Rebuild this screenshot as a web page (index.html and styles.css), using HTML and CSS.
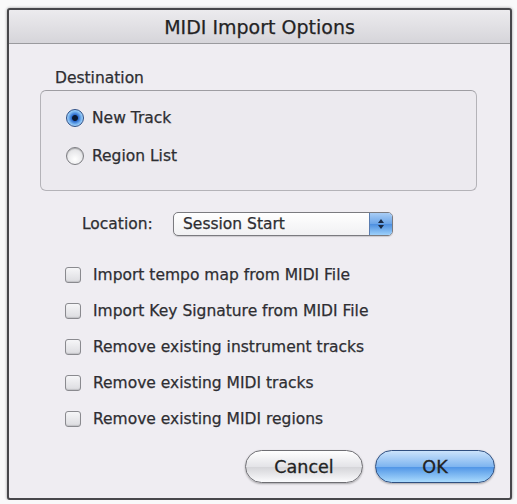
FILE: index.html
```html
<!doctype html>
<html lang="en">
  <head>
    <meta charset="UTF-8" />
    <title>MIDI Import Options</title>
    <link rel="stylesheet" href="styles.css">
  </head>
  <body>
    <div class="dialog">
      <div class="titleBar">MIDI Import Options</div>

      <div class="content">
        <div class="groupName">Destination</div>
        <div class="group">
          <label class="radioRow">
            <span class="radio checked"></span>
            <span>New Track</span>
          </label>
          <label class="radioRow">
            <span class="radio"></span>
            <span>Region List</span>
          </label>
        </div>

        <div class="locationRow">
          <span class="locationLabel">Location:</span>
          <div class="popup">
            <span class="popupText">Session Start</span>
            <span class="popupArrows">
              <svg width="8" height="12" viewBox="0 0 8 12">
                <path d="M4 1 L7 5 L1 5 Z" fill="#1a2a44"/>
                <path d="M4 11 L7 7 L1 7 Z" fill="#1a2a44"/>
              </svg>
            </span>
          </div>
        </div>

        <div class="options">
          <label class="checkRow"><span class="checkbox"></span>Import tempo map from MIDI File</label>
          <label class="checkRow"><span class="checkbox"></span>Import Key Signature from MIDI File</label>
          <label class="checkRow"><span class="checkbox"></span>Remove existing instrument tracks</label>
          <label class="checkRow"><span class="checkbox"></span>Remove existing MIDI tracks</label>
          <label class="checkRow"><span class="checkbox"></span>Remove existing MIDI regions</label>
        </div>

        <div class="buttons">
          <button class="btn cancel">Cancel</button>
          <button class="btn default">OK</button>
        </div>
      </div>
    </div>
  </body>
</html>
```

FILE: styles.css
```css
body {
  margin: 0;
  background: #f9f9fa;
  font-family: "DejaVu Sans", "Liberation Sans", sans-serif;
  font-size: 15.5px;
  color: #2e2e32;
  -webkit-text-stroke: 0.25px #2e2e32;
}

.dialog {
  margin: 8px 0 0 7px;
  width: 501px;
  height: 488px;
  border: 2px solid #47474b;
  border-radius: 3px;
  background: #efedf2;
  box-shadow: 0 0 3px rgba(0, 0, 0, 0.4);
  display: flex;
  flex-direction: column;
}

.titleBar {
  height: 33px;
  line-height: 34px;
  text-align: center;
  font-size: 19px;
  color: #222;
  background: linear-gradient(#ecebee, #d6d5da);
  border-bottom: 1px solid #9a9a9e;
  border-radius: 2px 2px 0 0;
}

.content {
  padding: 0 15px 0 31px;
  display: flex;
  flex-direction: column;
  flex: 1;
}

.groupName {
  margin: 24px 0 0 15px;
  height: 20px;
  line-height: 20px;
}

.group {
  margin-top: 2px;
  height: 101px;
  width: 437px;
  box-sizing: border-box;
  border: 1px solid #b4b3b8;
  border-top-color: #9e9da2;
  border-radius: 6px;
  background: #eceaef;
  padding: 17px 0 0 25px;
  display: flex;
  flex-direction: column;
  gap: 18px;
}

.radioRow {
  display: flex;
  align-items: center;
  gap: 8px;
  height: 20px;
}

.radio {
  width: 16px;
  height: 16px;
  border-radius: 50%;
  border: 1px solid #7d7d82;
  background: radial-gradient(circle at 50% 70%, #ffffff, #d8d8dc);
  box-shadow: inset 0 1px 1px rgba(0, 0, 0, 0.25);
}

.radio.checked {
  border-color: #2d4f86;
  background: radial-gradient(circle at 50% 50%, #0b1a33 0 2.5px, #2f6fd0 3.5px, #7db9f2 6.5px, #bfe3ff 9px);
  box-shadow: none;
}

.locationRow {
  margin: 21px 0 0 42px;
  display: flex;
  align-items: center;
  height: 24px;
}

.locationLabel {
  width: 91px;
}

.popup {
  width: 218px;
  height: 22px;
  border: 1px solid #7b7b80;
  border-radius: 5px;
  background: linear-gradient(#ffffff, #f1f1f3);
  display: flex;
  align-items: center;
  overflow: hidden;
  box-shadow: 0 1px 1px rgba(0, 0, 0, 0.15);
}

.popupText {
  flex: 1;
  padding-left: 9px;
}

.popupArrows {
  width: 22px;
  height: 22px;
  border-left: 1px solid #5a7db0;
  background: linear-gradient(#a9cdf5, #6aa4e8 50%, #4d8fe0 51%, #9cd0fb);
  display: flex;
  align-items: center;
  justify-content: center;
}

.options {
  margin: 30px 0 0 25px;
  display: flex;
  flex-direction: column;
  gap: 18px;
}

.checkRow {
  display: flex;
  align-items: center;
  gap: 12px;
  height: 18px;
}

.checkbox {
  width: 14px;
  height: 14px;
  border: 1px solid #8a8a8f;
  border-radius: 3px;
  background: linear-gradient(#f6f6f8, #dcdce0);
  box-shadow: inset 0 -1px 1px rgba(0, 0, 0, 0.12);
}

.buttons {
  margin-top: 22px;
  display: flex;
  justify-content: flex-end;
  gap: 12px;
}

.btn {
  font-family: inherit;
  font-size: 17.5px;
  color: #222;
  -webkit-text-stroke: 0.3px #222;
  height: 33px;
  border-radius: 17px;
  border: 1px solid #6e6e73;
  background: linear-gradient(#ffffff, #e4e4e8 50%, #d4d4d8 51%, #fbfbfd);
  box-shadow: 0 1px 2px rgba(0, 0, 0, 0.3);
}

.btn.cancel {
  width: 118px;
}

.btn.default {
  width: 120px;
  border-color: #2f4f80;
  background: linear-gradient(#cbe3fb, #7fb5f0 50%, #4f94e6 51%, #a9dafd);
}
```
